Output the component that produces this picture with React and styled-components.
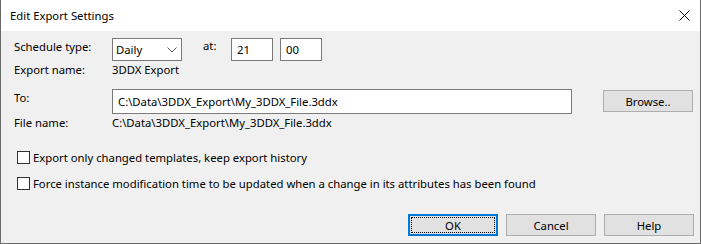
import React from "react";
import styled, { createGlobalStyle } from "styled-components";

const GlobalStyle = createGlobalStyle`
  body {
    margin: 0;
    background: #ffffff;
  }
  * {
    box-sizing: border-box;
  }
`;

const Window = styled.div`
  width: 701px;
  height: 244px;
  display: flex;
  flex-direction: column;
  border: 1px solid #6a6a6a;
  border-top: none;
  font-family: "Noto Sans", "Segoe UI", sans-serif;
  font-size: 11.3px;
  color: #000;
  overflow: hidden;
`;

const TitleBar = styled.div`
  height: 31px;
  flex-shrink: 0;
  background: #fff;
  display: flex;
  align-items: center;
  justify-content: space-between;
  padding: 0 10px 0 9px;
`;

const Body = styled.div`
  flex: 1;
  background: #f0f0f0;
  padding: 7px 6px 0 13px;
  display: flex;
  flex-direction: column;
`;

const Row = styled.div`
  display: flex;
  align-items: flex-start;
  margin-top: ${(p) => p.$top || 0}px;
  height: ${(p) => p.$height}px;
`;

const Label = styled.div`
  width: 98px;
  line-height: 15px;
  padding-top: ${(p) => p.$pad || 0}px;
  white-space: nowrap;
`;

const Value = styled.div`
  line-height: 15px;
  white-space: nowrap;
`;

const Select = styled.div`
  width: 70px;
  height: 23px;
  background: #fff;
  border: 1px solid #7a7a7a;
  display: flex;
  align-items: center;
  justify-content: space-between;
  padding: 0 4px 0 3px;

  svg {
    display: block;
  }
`;

const At = styled.div`
  width: 28px;
  margin-left: 21px;
  line-height: 15px;
`;

const TextBox = styled.div`
  width: ${(p) => p.$width}px;
  height: ${(p) => p.$height || 23}px;
  margin-left: ${(p) => p.$gap || 0}px;
  background: #fff;
  border: 1px solid #7a7a7a;
  display: flex;
  align-items: center;
  padding-left: ${(p) => p.$pad || 5}px;
  white-space: nowrap;
`;

const Button = styled.div`
  width: 90px;
  height: 22px;
  background: #e1e1e1;
  border: ${(p) => (p.$focus ? "2px solid #0078d7" : "1px solid #adadad")};
  outline: ${(p) => (p.$focus ? "1px dotted #000" : "none")};
  outline-offset: -4px;
  display: flex;
  align-items: center;
  justify-content: center;
  margin-left: ${(p) => p.$gap || 0}px;
  margin-top: ${(p) => p.$top || 0}px;
`;

const CheckRow = styled.label`
  display: flex;
  align-items: center;
  height: 17px;
  margin-top: ${(p) => p.$top}px;
  padding-left: 3px;
  white-space: nowrap;
`;

const Box = styled.span`
  width: 13px;
  height: 13px;
  border: 1px solid #333;
  background: #fff;
  margin-right: 3px;
  flex-shrink: 0;
`;

const Footer = styled.div`
  display: flex;
  justify-content: flex-end;
  margin-top: 22px;
`;

const Chevron = () => (
  <svg width="10" height="6" viewBox="0 0 10 6">
    <path d="M0.5 0.5 L5 5 L9.5 0.5" fill="none" stroke="#555" strokeWidth="1" />
  </svg>
);

const CloseIcon = () => (
  <svg width="11" height="11" viewBox="0 0 11 11">
    <path d="M0.5 0.5 L10.5 10.5 M10.5 0.5 L0.5 10.5" fill="none" stroke="#000" strokeWidth="1" />
  </svg>
);

const App = () => {
  return (
    <>
      <GlobalStyle />
      <Window>
        <TitleBar>
          <span>Edit Export Settings</span>
          <CloseIcon />
        </TitleBar>
        <Body>
          <Row $height={23}>
            <Label $pad={1}>Schedule type:</Label>
            <Select>
              <span>Daily</span>
              <Chevron />
            </Select>
            <At>at:</At>
            <TextBox $width={42} $pad={5}>21</TextBox>
            <TextBox $width={42} $gap={7} $pad={5}>00</TextBox>
          </Row>
          <Row $top={1} $height={15}>
            <Label>Export name:</Label>
            <Value>3DDX Export</Value>
          </Row>
          <Row $top={12} $height={25}>
            <Label $pad={1}>To:</Label>
            <TextBox $width={460} $height={25} $pad={5}>
              C:\Data\3DDX_Export\My_3DDX_File.3ddx
            </TextBox>
            <Button $top={1} $gap={31}>Browse..</Button>
          </Row>
          <Row $top={1} $height={15}>
            <Label>File name:</Label>
            <Value>C:\Data\3DDX_Export\My_3DDX_File.3ddx</Value>
          </Row>
          <CheckRow $top={19}>
            <Box />
            Export only changed templates, keep export history
          </CheckRow>
          <CheckRow $top={9}>
            <Box />
            Force instance modification time to be updated when a change in its attributes has been found
          </CheckRow>
          <Footer>
            <Button $focus>OK</Button>
            <Button $gap={8}>Cancel</Button>
            <Button $gap={8}>Help</Button>
          </Footer>
        </Body>
      </Window>
    </>
  );
};

export default App;
